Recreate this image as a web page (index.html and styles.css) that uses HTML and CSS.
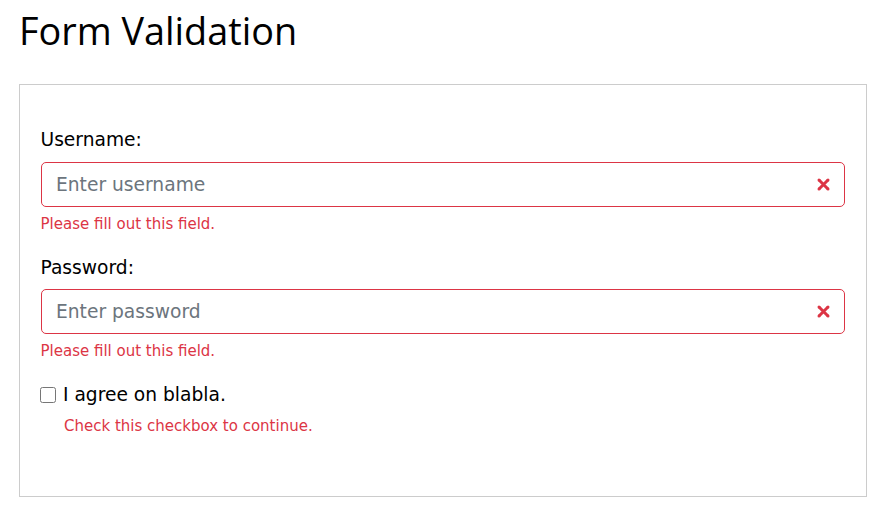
FILE: index.html
```html
<!DOCTYPE html>
<html>
<head>
<meta charset="utf-8">
<link rel="stylesheet" href="styles.css">
</head>
<body>
<div class="page">
  <h2 class="title">Form Validation</h2>
  <form class="card">
    <div class="group">
      <label class="label">Username:</label>
      <div class="field">
        <input class="input" type="text" placeholder="Enter username">
        <svg class="icon" viewBox="-2 -2 7 7" fill="#dc3545"><path stroke="#dc3545" d="M0 0l3 3m0-3L0 3"/><circle r=".5"/><circle cx="3" r=".5"/><circle cy="3" r=".5"/><circle cx="3" cy="3" r=".5"/></svg>
      </div>
      <div class="feedback">Please fill out this field.</div>
    </div>
    <div class="group">
      <label class="label">Password:</label>
      <div class="field">
        <input class="input" type="password" placeholder="Enter password">
        <svg class="icon" viewBox="-2 -2 7 7" fill="#dc3545"><path stroke="#dc3545" d="M0 0l3 3m0-3L0 3"/><circle r=".5"/><circle cx="3" r=".5"/><circle cy="3" r=".5"/><circle cx="3" cy="3" r=".5"/></svg>
      </div>
      <div class="feedback">Please fill out this field.</div>
    </div>
    <div class="group check">
      <label class="check-label"><input class="checkbox" type="checkbox"> I agree on blabla.</label>
      <div class="feedback indent">Check this checkbox to continue.</div>
    </div>
  </form>
</div>
</body>
</html>
```
FILE: styles.css
```css
* { box-sizing: border-box; }
html, body { margin: 0; background: #fff; }
body {
  font-family: "DejaVu Sans", Verdana, sans-serif;
  font-size: 18.67px;
  line-height: 1.5;
  color: #212529;
}
.page { padding: 0 22px 0 19px; }
.title {
  font-family: "Open Sans", "Segoe UI", sans-serif;
  font-weight: 400;
  font-size: 37.8px;
  line-height: 1.2;
  margin: 8px 0 0 0;
  padding-bottom: 31px;
  color: #000;
}
.card {
  border: 1px solid #ccc;
  padding: 41px 21px 59px 20.5px;
  margin: 0;
}
.group { margin-bottom: 18.67px; }
.group:last-child { margin-bottom: 0; }
.label { display: block; margin-bottom: 7.5px; color: #000; }
.field { position: relative; }
.input {
  display: block;
  width: 100%;
  height: 44.67px;
  padding: 7px 40px 7px 14.5px;
  font-family: inherit;
  font-size: 18.67px;
  line-height: 1.5;
  color: #495057;
  background: #fff;
  border: 1px solid #dc3545;
  border-radius: 5px;
  outline: none;
}
.input::placeholder { color: #6c757d; opacity: 1; }
.icon {
  position: absolute;
  right: 11px;
  top: 11.8px;
  width: 21px;
  height: 21px;
}
.feedback {
  margin-top: 6px;
  font-size: 15px;
  line-height: 1.5;
  color: #dc3545;
}
.check-label { display: flex; align-items: center; color: #000; }
.checkbox {
  width: 16px;
  height: 16px;
  margin: 0 7px 0 -0.5px;
}
.indent { padding-left: 23.5px; }
```
